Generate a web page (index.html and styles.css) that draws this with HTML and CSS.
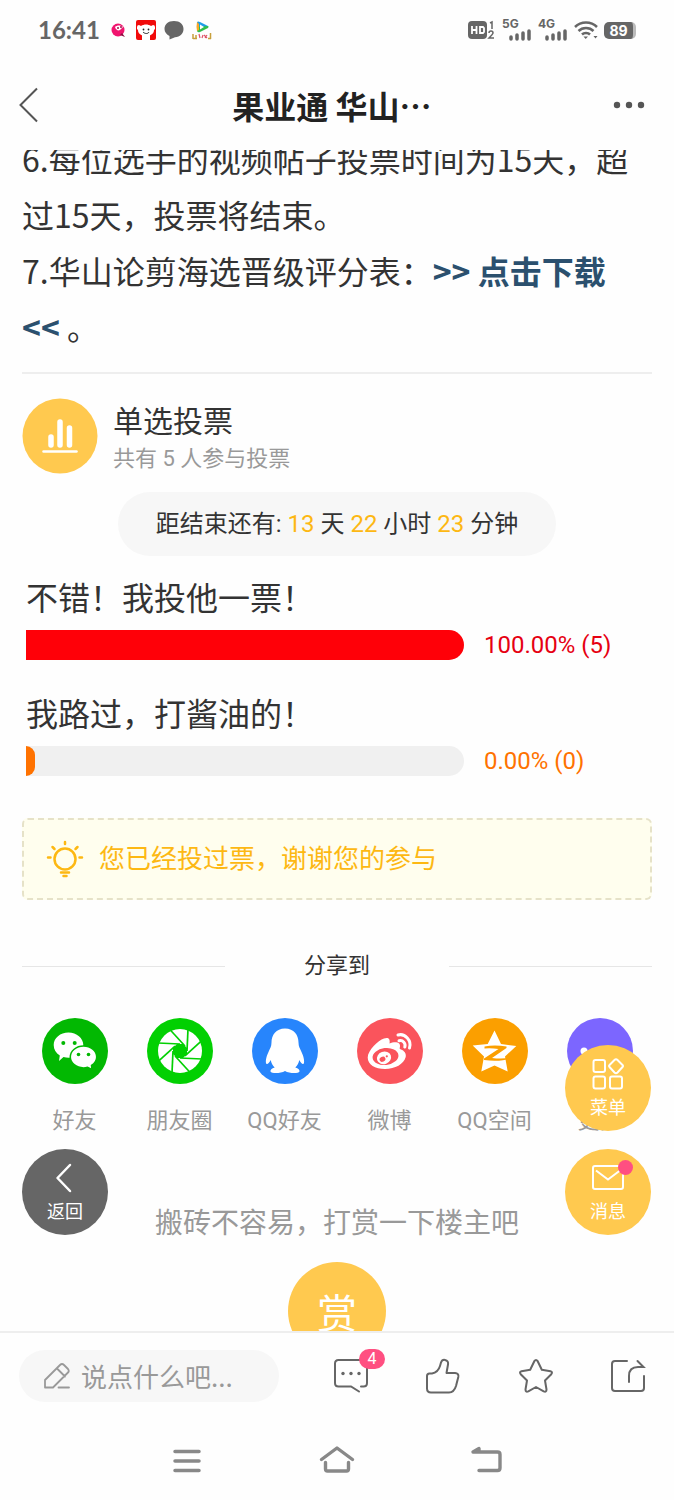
FILE: index.html
```html
<!DOCTYPE html>
<html lang="zh-CN">
<head>
<meta charset="utf-8">
<meta name="viewport" content="width=device-width, initial-scale=1">
<title>果业通 华山…</title>
<link rel="stylesheet" href="styles.css">
</head>
<body>
<div class="app">
  <div class="status">
    <div class="status-left">
      <span class="clock">16:41</span>
      <svg class="app-icon" viewBox="0 0 20 20" aria-hidden="true">
        <circle cx="10" cy="10" r="6.500" fill="#f0146e"/>
        <path d="M14 13l3 4-5-2z" fill="#8a1040"/>
        <path d="M7 7c2-2 6-2 8 0l-3 3c-2 1-4 0-5-3z" fill="#fff"/>
        <circle cx="10" cy="8" r="1" fill="#a01048"/><circle cx="13" cy="7" r="1" fill="#a01048"/>
      </svg>
      <svg class="app-icon" viewBox="0 0 20 20" aria-hidden="true">
        <rect width="20" height="20" rx="2" fill="#f10a0a"/>
        <path d="M1 7q0-2 2-2l2 1c3-2 7-2 10 0l2-1q2 0 2 2v2l-1 1c0 4-4 6-8 6s-8-2-8-6L1 9z" fill="#fff"/>
        <path d="M6 15h8v5H6z" fill="#fff"/>
        <circle cx="7.500" cy="9.500" r=".9" fill="#222"/><circle cx="12.500" cy="9.500" r=".9" fill="#222"/>
        <path d="M7 12c2 2 5 2 6 0" stroke="#222" fill="none"/>
      </svg>
      <svg class="app-icon" viewBox="0 0 20 20" aria-hidden="true">
        <path d="M10 1c6 0 9.500 3.500 9.500 8S16 17 11 17.300L5.500 19.500V16C2.500 14.500.5 12 .5 9 .5 4.500 4 1 10 1z" fill="#666"/>
      </svg>
      <svg class="app-icon" viewBox="0 0 20 20" aria-hidden="true">
        <path d="M5 2q1-1 3 0l8 4q1 1 0 1H5z" fill="#1e9ee8"/>
        <path d="M16 6q1 1 0 2l-8 4q-2 1-3-1V7z" fill="#2fbf4a"/>
        <path d="M5 2q-1 5 0 9l2-1V4z" fill="#f9a826"/>
        <path d="M8 4.500l4 2.500-4 2.500z" fill="#fff"/>
        <path d="M1 14v5M1 18.500h4M4 15v3M16 18.500h3M18.500 13v6" stroke="#c8a03c" stroke-width="1.500" fill="none"/>
        <path d="M7 14l1 4M11 15l-1 3M12 15l3 3M15 15l-2 3" stroke="#dd5568" stroke-width="1.200" fill="none"/>
      </svg>
    </div>
    <div class="status-right">
      <svg width="28" height="22" viewBox="0 0 28 22" aria-label="HD">
        <rect x="0" y="2" width="19" height="18" rx="4" fill="#666"/>
        <path d="M4 7v8M8.500 7v8M4 11h4.500M12 8v6h3l1-1V9l-1-1z" stroke="#fff" stroke-width="1.800" fill="none"/>
        <path d="M22 4l2-1v7M21 14q0-2 2-2t2 2q0 1-4 5h5" stroke="#666" stroke-width="1.500" fill="none"/>
      </svg>
      <span class="signal"><span>5G</span>
        <svg width="24" height="12" viewBox="0 0 24 12" aria-hidden="true"><path d="M3 8v2M9 6v4M15 4v6M21 2v8" stroke="#666" stroke-width="3.500" stroke-linecap="round"/></svg></span>
      <span class="signal"><span>4G</span>
        <svg width="24" height="12" viewBox="0 0 24 12" aria-hidden="true"><path d="M3 8v2M9 6v4M15 4v6M21 2v8" stroke="#666" stroke-width="3.500" stroke-linecap="round"/></svg></span>
      <svg width="24" height="20" viewBox="0 0 24 20" aria-hidden="true">
        <path d="M1 7C7 1 17 1 23 7M4.500 11c4-4 11-4 15 0M8 14.500c2-2 6-2 8 0" stroke="#666" stroke-width="2.500" fill="none"/>
        <path d="M9.500 16.500h4.500L11.700 19zM19.500 16h4l-2 2.500z" fill="#666"/>
      </svg>
      <span class="battery">89</span>
    </div>
  </div>

  <header class="header">
    <button class="icon-button" aria-label="返回上一页">
      <svg width="20" height="36" viewBox="0 0 20 36" aria-hidden="true"><path d="M18 1.500L1.500 18 18 34.500" stroke="#555" stroke-width="2" fill="none"/></svg>
    </button>
    <h1 class="title">果业通 华山⋯</h1>
    <button class="icon-button icon-button-end" aria-label="更多选项">
      <svg width="32" height="8" viewBox="0 0 32 8" aria-hidden="true"><g fill="#555"><circle cx="4" cy="4" r="3.200"/><circle cx="16" cy="4" r="3.200"/><circle cx="28" cy="4" r="3.200"/></g></svg>
    </button>
  </header>

  <div class="viewport">
    <main class="content">
      <div class="article">
        <p>6.每位选手的视频帖子投票时间为15天，超过15天，投票将结束。</p>
        <p>7.华山论剪海选晋级评分表：<a class="download" href="#">&gt;&gt; 点击下载 &lt;&lt;</a>&nbsp;。</p>
      </div>

      <section class="poll">
        <div class="poll-head">
          <svg width="76" height="76" viewBox="0 0 76 76" aria-hidden="true">
            <circle cx="38" cy="38" r="37.500" fill="#ffc94f"/>
            <path d="M29 39v8M38 24v23M47.500 30v17" stroke="#fff" stroke-width="5.500" stroke-linecap="round"/>
            <path d="M21.500 53.500h33" stroke="#fff" stroke-width="2.500" stroke-linecap="round"/>
          </svg>
          <div class="poll-info">
            <h2 class="poll-title">单选投票</h2>
            <p class="poll-count">共有 5 人参与投票</p>
          </div>
        </div>
        <p class="countdown">距结束还有: <b>13</b> 天 <b>22</b> 小时 <b>23</b> 分钟</p>
        <div class="option">
          <p class="option-name">不错！我投他一票！</p>
          <div class="option-result option-red">
            <div class="bar"><div class="fill" style="width:100%"></div></div>
            <span class="rate">100.00% (5)</span>
          </div>
        </div>
        <div class="option">
          <p class="option-name">我路过，打酱油的！</p>
          <div class="option-result option-orange">
            <div class="bar"><div class="fill" style="width:2%"></div></div>
            <span class="rate">0.00% (0)</span>
          </div>
        </div>
      </section>

      <div class="notice">
        <svg width="40" height="40" viewBox="0 0 40 40" aria-hidden="true">
          <g stroke="#fdb813" fill="none" stroke-linecap="round">
            <circle cx="20" cy="20" r="10.500" stroke-width="2.500"/>
            <path d="M20 3v2M7.500 8l2 2M32.500 8l-2 2M3 18.500h2.500M34.500 18.500H37" stroke-width="2.500"/>
            <path d="M16 33.500h8M18.500 37h3" stroke-width="2.500"/>
          </g>
        </svg>
        <p>您已经投过票，谢谢您的参与</p>
      </div>

      <div class="share-title"><span>分享到</span></div>
      <div class="share">
        <a class="share-item" href="#">
          <svg class="share-icon" viewBox="0 0 66 66" aria-hidden="true">
            <circle cx="33" cy="33" r="33" fill="#02b802"/>
            <path d="M26.500 14.500c8.200 0 14.800 5.600 14.800 12.500S34.700 39.700 26.500 39.700q-2.500 0-5-.7L17 43l.8-5.500C14 35 11.700 31.500 11.700 27c0-7 6.600-12.500 14.800-12.500z" fill="#fff"/>
            <path d="M41.500 28c7.300 0 13.200 4.900 13.200 11 0 3.500-2 6.500-5.200 8.500l.5 4-4.500-2.200q-2 .6-4 .6c-7.300 0-13.200-4.900-13.200-10.900s5.900-11 13.200-11z" fill="#fff" stroke="#02b802" stroke-width="1.500"/>
            <g fill="#02b802"><circle cx="21.300" cy="25" r="2"/><circle cx="32.700" cy="25" r="2"/><circle cx="36.500" cy="36.500" r="1.800"/><circle cx="46.500" cy="36.500" r="1.800"/></g>
          </svg><span>好友</span></a>
        <a class="share-item" href="#">
          <svg class="share-icon" viewBox="0 0 66 66" aria-hidden="true">
            <circle cx="33" cy="33" r="33" fill="#02d002"/><circle cx="33" cy="33" r="22" fill="#fff"/>
            <g transform="translate(33 33)">
              <path d="M7 -3V3L3 7H-3L-7 3V-3L-3 -7H3z" fill="#02d002"/>
              <g stroke="#02d002" stroke-width="1.700">
                <path id="blade" d="M8 -22L7 0"/>
                <use href="#blade" transform="rotate(45)"/><use href="#blade" transform="rotate(90)"/><use href="#blade" transform="rotate(135)"/><use href="#blade" transform="rotate(180)"/><use href="#blade" transform="rotate(225)"/><use href="#blade" transform="rotate(270)"/><use href="#blade" transform="rotate(315)"/>
              </g>
            </g>
          </svg><span>朋友圈</span></a>
        <a class="share-item" href="#">
          <svg class="share-icon" viewBox="0 0 66 66" aria-hidden="true">
            <circle cx="33" cy="33" r="33" fill="#2785fc"/>
            <path d="M33 10.500C24 10.500 19.500 17 19.500 24.500c0 4-1.500 6-3 9.500-2.500 5-3.500 11-1.800 12 1 .5 3-2 4-4 .6 3 2 5.500 4 7.500-3 1-4.700 2.500-4.200 4 1 2.200 10 2.200 14.500-.5 4.500 2.700 13.500 2.700 14.500.5.500-1.500-1.200-3-4.200-4 2-2 3.400-4.500 4-7.500 1 2 3 4.500 4 4 1.700-1 .7-7-1.800-12-1.500-3.500-3-5.500-3-9.500C46.500 17 42 10.500 33 10.500z" fill="#fff"/>
          </svg><span>QQ好友</span></a>
        <a class="share-item" href="#">
          <svg class="share-icon" viewBox="0 0 66 66" aria-hidden="true">
            <circle cx="33" cy="33" r="33" fill="#fa545c"/>
            <path d="M27 20.500c4-1.500 6.500 0 5.500 5 4-1.500 11-2.500 10.500 3-.2 1.500-1 2.500 1 3 3 1 5.500 4 4.700 7.500C47 46 38 51 28 51S10.700 46.500 10.700 39.500C11 32 21 22.500 27 20.500z" fill="#fff"/>
            <ellipse cx="28.500" cy="38.500" rx="13" ry="8.500" transform="rotate(-7 28.500 38.500)" fill="#fa545c"/>
            <ellipse cx="27" cy="39.800" rx="7.200" ry="6.200" transform="rotate(-20 27 39.800)" fill="#fff"/>
            <ellipse cx="25.500" cy="41.300" rx="3" ry="2.500" transform="rotate(-25 25.500 41.300)" fill="#fa545c"/><circle cx="29.800" cy="38.300" r="1.100" fill="#fa545c"/>
            <path d="M41 17c7-2 14 5.500 11.500 13M42 22.800c4-1 7 2.500 5.800 6.200" stroke="#fff" stroke-width="3" fill="none" stroke-linecap="round"/>
          </svg><span>微博</span></a>
        <a class="share-item" href="#">
          <svg class="share-icon" viewBox="0 0 66 66" aria-hidden="true">
            <circle cx="33" cy="33" r="33" fill="#fb9f00"/>
            <path d="M32.500 12.500L39 26l15.300 2L43 38.500l2.700 15-13.200-6-13.200 6 2.700-15L10.700 27.500 25.700 26z" fill="#fff"/>
            <path d="M22.500 28.500q10-2 22 0v1.500L30 40q8 1 19 0-10 4-27 2v-1.500L36.500 31q-7-1-14-.5z" fill="#fb9f00"/>
          </svg><span>QQ空间</span></a>
        <a class="share-item" href="#">
          <svg class="share-icon" viewBox="0 0 66 66" aria-hidden="true">
            <circle cx="33" cy="33" r="33" fill="#7c66ff"/>
            <g fill="#fff"><circle cx="17" cy="33" r="3.500"/><circle cx="33" cy="33" r="3.500"/><circle cx="49" cy="33" r="3.500"/></g>
          </svg><span>更多</span></a>
      </div>

      <p class="reward-text">搬砖不容易，打赏一下楼主吧</p>
      <button class="reward">赏</button>
    </main>

    <button class="fab fab-back">
      <svg width="32" height="32" viewBox="0 0 32 32" aria-hidden="true"><path d="M21 3L8.500 16 21 29" stroke="#fff" stroke-width="2.500" fill="none" stroke-linecap="round" stroke-linejoin="round"/></svg>
      <span>返回</span>
    </button>
    <div class="fab-stack">
      <button class="fab">
        <svg width="32" height="32" viewBox="0 0 32 32" aria-hidden="true"><g stroke="#fff" stroke-width="2" fill="none"><rect x="1.500" y="2" width="11.500" height="12" rx="2"/><rect x="1.500" y="18.500" width="11.500" height="12" rx="2"/><rect x="18" y="18.500" width="12" height="12" rx="2"/><path d="M22.500 2q1.500-1.500 3 0l5 5q1 1 0 2l-5 5.500q-1.500 1.500-3 0L17.500 9q-1-1 0-2z"/></g></svg>
        <span>菜单</span>
      </button>
      <button class="fab">
        <svg width="32" height="32" viewBox="0 0 32 32" aria-hidden="true"><g stroke="#fff" stroke-width="2" fill="none"><rect x="1" y="4" width="30" height="23" rx="2"/><path d="M4 8.500l12 9 12-9"/></g></svg>
        <span>消息</span>
        <i class="dot"></i>
      </button>
    </div>
  </div>

  <footer class="actions">
    <label class="comment">
      <svg width="28" height="28" viewBox="0 0 28 28" aria-hidden="true"><path d="M2 25v-7L17 3q2-2 4 0l4 4q1.500 2 0 3.500L10 25.500H2zM14 6.500l8 8M15.500 25.500H26" stroke="#999" stroke-width="1.800" fill="none" stroke-linecap="round" stroke-linejoin="round"/></svg>
      <input type="text" placeholder="说点什么吧..." aria-label="说点什么吧">
    </label>
    <div class="action-list">
      <button class="action" aria-label="评论 4">
        <svg width="36" height="36" viewBox="0 0 36 36" aria-hidden="true"><path d="M28 28.500h2.500q3.500 0 3.500-3.500V5.500Q34 2 30.500 2h-25Q2 2 2 5.500V25q0 3.500 3.500 3.500H18l8 5" stroke="#666" stroke-width="2" fill="none" stroke-linecap="round"/><g fill="#666"><circle cx="10" cy="15.500" r="1.700"/><circle cx="18" cy="15.500" r="1.700"/><circle cx="26" cy="15.500" r="1.700"/></g></svg>
        <span class="badge">4</span>
      </button>
      <button class="action" aria-label="点赞">
        <svg width="36" height="36" viewBox="0 0 36 36" aria-hidden="true"><path d="M2 18q0-2.500 2.500-2.500H7q6-1 8-7.500l1-3.500c.8-2.200 2-3 4-2.600 2.500.5 3.500 2.500 3 4.600L21.500 15H30q4 .3 3.300 4L31 28q-2 6.500-7 6.500H6q-4 0-4-4z" stroke="#666" stroke-width="2" fill="none" stroke-linejoin="round"/></svg>
      </button>
      <button class="action" aria-label="收藏">
        <svg width="36" height="36" viewBox="0 0 36 36" aria-hidden="true"><path d="M16.300 3.200q1.700-2.400 3.400 0l4.100 8.600 8.700 1.400q2.500.7.800 3l-6.300 6.300 1.500 9q0 3-2.800 1.800L18 29l-7.700 4.300q-2.800 1.200-2.800-1.800l1.500-9-6.300-6.300q-1.700-2.300.8-3l8.700-1.400z" stroke="#666" stroke-width="2" fill="none" stroke-linejoin="round"/></svg>
      </button>
      <button class="action" aria-label="分享">
        <svg width="36" height="36" viewBox="0 0 36 36" aria-hidden="true"><path d="M17 3H5Q2 3 2 6v24q0 3 3 3h26q3 0 3-3V18M19 24v-6q0-9 9-9h5.500l-6-6" stroke="#666" stroke-width="2" fill="none" stroke-linecap="round"/></svg>
      </button>
    </div>
  </footer>

  <nav class="system-nav" aria-label="系统导航">
    <button class="system-button" aria-label="最近任务"><svg width="36" height="32" viewBox="0 0 36 32" aria-hidden="true"><path d="M6 6.500h24M6 16h24M6 25.500h24" stroke="#888" stroke-width="3.500" stroke-linecap="round"/></svg></button>
    <button class="system-button" aria-label="主屏幕"><svg width="36" height="32" viewBox="0 0 36 32" aria-hidden="true"><path d="M2.500 14.500L18 3l15.500 11.500M6.500 17.500V24q0 2 2 2h19q2 0 2-2v-6.500" stroke="#888" stroke-width="3.400" fill="none" stroke-linecap="round" stroke-linejoin="round"/></svg></button>
    <button class="system-button" aria-label="后退"><svg width="36" height="32" viewBox="0 0 36 32" aria-hidden="true"><path d="M4 7h24.500q2.500 0 2.500 2.500V23q0 2.500-2.500 2.500H10M4 7l6-3.500V7" stroke="#888" stroke-width="3.400" fill="none" stroke-linecap="round" stroke-linejoin="round"/></svg></button>
  </nav>
</div>
</body>
</html>
```

FILE: styles.css
```css
* { box-sizing: border-box; }

body {
  margin: 0;
  background: #fefefe;
  color: #333;
  font-family: Roboto, "Noto Sans CJK SC", sans-serif;
}

h1, h2, p { margin: 0; font-weight: 400; }
svg { display: block; flex: none; }
a { color: inherit; text-decoration: none; }
button {
  padding: 0;
  border: 0;
  background: none;
  color: inherit;
  font-family: inherit;
}

.app {
  display: flex;
  flex-direction: column;
  height: 100vh;
  min-height: 600px;
}

/* Status bar */
.status {
  display: flex;
  flex: none;
  justify-content: space-between;
  align-items: center;
  height: 60px;
  padding: 0 38px;
  color: #666;
}
.status-left { display: flex; align-items: center; gap: 8px; }
.status-right { display: flex; align-items: center; gap: 6px; }
.clock { font: 700 24px/28px Lato, sans-serif; }
.app-icon { width: 20px; height: 20px; }
.signal {
  display: flex;
  flex-direction: column;
  width: 30px;
  font: 700 12px/10px Inter, sans-serif;
}
.signal svg { align-self: flex-end; }
.battery {
  width: 32px;
  border-right: 3px solid #bbb;
  border-radius: 5px;
  background: #666;
  color: #fff;
  font: 700 14px/17px Inter, sans-serif;
  text-align: center;
}

/* Title bar */
.header {
  display: grid;
  flex: none;
  grid-template-columns: 1fr auto 1fr;
  align-items: center;
  height: 90px;
  padding: 0 29px 0 19px;
}
.title {
  font: 700 32px/48px "Noto Sans CJK SC", sans-serif;
  color: #222;
}
.icon-button { justify-self: start; }
.icon-button-end { justify-self: end; }

/* Scrolling page */
.viewport {
  position: relative;
  flex: 1;
  min-height: 0;
  overflow: hidden;
}
.content {
  display: flex;
  flex-direction: column;
  margin-top: -20px;
  padding: 0 22px;
}
.article {
  padding-bottom: 18px;
  border-bottom: 2px solid #eee;
  font-family: "Noto Sans CJK SC", sans-serif;
  font-size: 32px;
  line-height: 56px;
}
.download { color: #2b506e; font-weight: 700; }

.poll { display: flex; flex-direction: column; padding-top: 22px; }
.poll-head { display: flex; align-items: center; gap: 15px; }
.poll-info { padding-top: 6px; }
.poll-title { font-size: 30px; line-height: 40px; }
.poll-count { color: #999; font-size: 22px; line-height: 34px; }
.countdown {
  align-self: center;
  margin: 16px 0;
  padding: 0 38px;
  border-radius: 32px;
  background: #f7f7f7;
  font-size: 24px;
  line-height: 64px;
}
.countdown b { color: #fdb813; font-weight: 400; }

.option { padding: 0 4px; margin-bottom: 28px; }
.option-name { font-size: 32px; line-height: 54px; }
.option-result {
  display: flex;
  align-items: center;
  gap: 20px;
  margin-top: 4px;
  font-size: 24px;
  line-height: 30px;
}
.bar {
  flex: 1;
  height: 30px;
  overflow: hidden;
  border-radius: 0 16px 16px 0;
  background: #f0f0f0;
}
.fill { height: 100%; border-radius: 0 12px 12px 0; background: currentColor; }
.rate { width: 164px; }
.option-red .fill { background: #ff0008; }
.option-red { color: #e60012; }
.option-orange { color: #ff7200; }

.notice {
  display: flex;
  align-items: center;
  gap: 14px;
  margin-top: 14px;
  padding: 19px 21px;
  border: 2px dashed #e6e2c8;
  border-radius: 6px;
  background: #fffeee;
  color: #fdb813;
  font-size: 26px;
  line-height: 40px;
}

.share-title {
  display: flex;
  align-items: center;
  gap: 79px;
  margin-top: 48px;
  font-size: 22px;
  line-height: 36px;
}
.share-title::before, .share-title::after {
  content: "";
  flex: 1;
  height: 1px;
  background: #e6e6e6;
}
.share {
  display: grid;
  grid-template-columns: repeat(6, 1fr);
  margin-top: 34px;
}
.share-item {
  display: flex;
  flex-direction: column;
  align-items: center;
  gap: 20px;
  color: #999;
  font-size: 22px;
  line-height: 34px;
  white-space: nowrap;
}
.share-icon { width: 66px; height: 66px; }

.reward-text {
  margin-top: 66px;
  color: #999;
  font-size: 28px;
  line-height: 40px;
  text-align: center;
}
.reward {
  align-self: center;
  width: 98px;
  height: 98px;
  margin-top: 18px;
  border-radius: 50%;
  background: #ffc94f;
  color: #fff;
  font-size: 40px;
}

/* Floating buttons over the page */
.fab {
  position: relative;
  display: flex;
  flex-direction: column;
  align-items: center;
  justify-content: center;
  gap: 2px;
  width: 86px;
  height: 86px;
  padding-top: 6px;
  border-radius: 50%;
  background: #ffc94f;
  color: #fff;
  font-size: 18px;
  line-height: 32px;
}
.fab-back {
  position: absolute;
  bottom: 96px;
  left: 22px;
  background: #666;
}
.fab-stack {
  position: absolute;
  right: 23px;
  bottom: 96px;
  display: flex;
  flex-direction: column;
  gap: 18px;
}
.dot {
  position: absolute;
  top: 11px;
  right: 18px;
  width: 15px;
  height: 15px;
  border-radius: 50%;
  background: #ff4f81;
}

/* Comment bar */
.actions {
  display: flex;
  flex: none;
  align-items: center;
  gap: 54px;
  height: 90px;
  padding: 0 28px 2px 19px;
  border-top: 2px solid #eee;
}
.comment {
  display: flex;
  align-items: center;
  gap: 10px;
  width: 260px;
  height: 52px;
  padding: 0 24px;
  border-radius: 26px;
  background: #f7f7f7;
}
.comment input {
  flex: 1;
  min-width: 0;
  padding: 0;
  border: 0;
  outline: 0;
  background: none;
  color: #333;
  font: 26px/36px "Noto Sans CJK SC", sans-serif;
}
.comment input::placeholder { color: #999; opacity: 1; }
.action-list { display: flex; flex: 1; justify-content: space-between; }
.action { position: relative; }
.badge {
  position: absolute;
  top: -9px;
  left: 26px;
  width: 26px;
  border-radius: 10px;
  background: #ff4f81;
  color: #fff;
  font-size: 16px;
  line-height: 20px;
}

/* System navigation */
.system-nav {
  display: flex;
  flex: none;
  justify-content: center;
  align-items: center;
  gap: 114px;
  height: 79px;
}
```
